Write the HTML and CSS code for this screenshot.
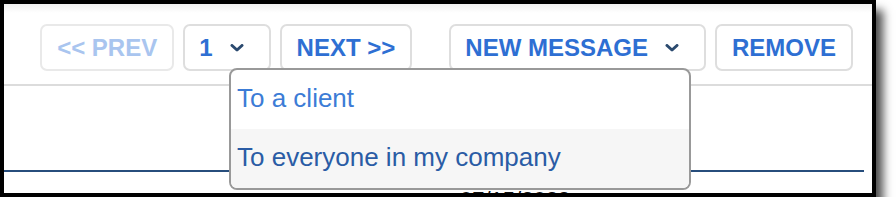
FILE: index.html
```html
<!DOCTYPE html>
<html>
<head>
  <title>Messages</title>
  <link rel="stylesheet" href="styles.css">
</head>
<body>
  <div class="frame">
    <div class="toolbar">
      <div class="pager">
        <button class="btn btn-disabled">&lt;&lt; PREV</button>
        <button class="btn btn-caret">1
          <svg class="caret" viewBox="0 0 14 8" width="14" height="8"><path d="M2 1.5 L7 6 L12 1.5"/></svg>
        </button>
        <button class="btn">NEXT &gt;&gt;</button>
      </div>
      <div class="actions">
        <div class="menu-wrap">
          <button class="btn btn-caret">NEW MESSAGE
            <svg class="caret" viewBox="0 0 14 8" width="14" height="8"><path d="M2 1.5 L7 6 L12 1.5"/></svg>
          </button>
          <ul class="menu">
            <li class="menu-item">To a client</li>
            <li class="menu-item menu-item-hover">To everyone in my company</li>
          </ul>
        </div>
        <button class="btn">REMOVE</button>
      </div>
    </div>
    <div class="list">
      <div class="list-head"></div>
      <div class="list-row">
        <span class="cell-date">07/15/2022</span>
      </div>
    </div>
  </div>
</body>
</html>
```

FILE: styles.css
```css
body {
  margin: 0;
  background: #fff;
  font-family: "Liberation Sans", Arial, sans-serif;
}

.frame {
  width: 868px;
  height: 189px;
  border: 4px solid #000;
  position: relative;
  overflow: hidden;
  background: linear-gradient(#f1f1f1, #fff 9px);
  box-shadow: 7px 10px 9px rgba(0, 0, 0, 0.7);
}

.toolbar {
  display: flex;
  justify-content: flex-end;
  gap: 37px;
  padding: 20px 19px 13px 0;
  border-bottom: 2px solid #dcdcdc;
}

.pager,
.actions {
  display: flex;
  gap: 9px;
}

.btn {
  display: flex;
  align-items: center;
  height: 47px;
  padding: 0 15px;
  border: 2px solid #dedede;
  border-radius: 7px;
  background: #fff;
  color: #2e6fd3;
  font-family: "Liberation Sans", Arial, sans-serif;
  font-size: 24px;
  font-weight: bold;
  cursor: pointer;
}

.btn-disabled {
  color: #a9c5ef;
  border-color: #e9e9e9;
  cursor: default;
}

.btn-caret {
  gap: 17px;
  padding: 0 25px 0 14px;
}

.caret {
  fill: none;
  stroke: #2b4a6f;
  stroke-width: 3;
  stroke-linecap: round;
  stroke-linejoin: round;
}

.menu-wrap {
  position: relative;
}

.menu {
  position: absolute;
  right: 15px;
  top: 44px;
  width: 458px;
  margin: 0;
  padding: 0;
  list-style: none;
  background: #fff;
  border: 2px solid #999;
  border-radius: 8px;
  overflow: hidden;
  z-index: 2;
}

.menu-item {
  height: 59px;
  line-height: 56px;
  padding-left: 6px;
  font-size: 26px;
  color: #3c7cd6;
}

.menu-item-hover {
  background: #f6f6f6;
  color: #2a5ca5;
}

.list-head {
  height: 84px;
  margin-right: 8px;
  border-bottom: 2px solid #274d7c;
}

.list-row {
  padding: 15px 0 0 456px;
  font-size: 22px;
  color: #111;
}
```
